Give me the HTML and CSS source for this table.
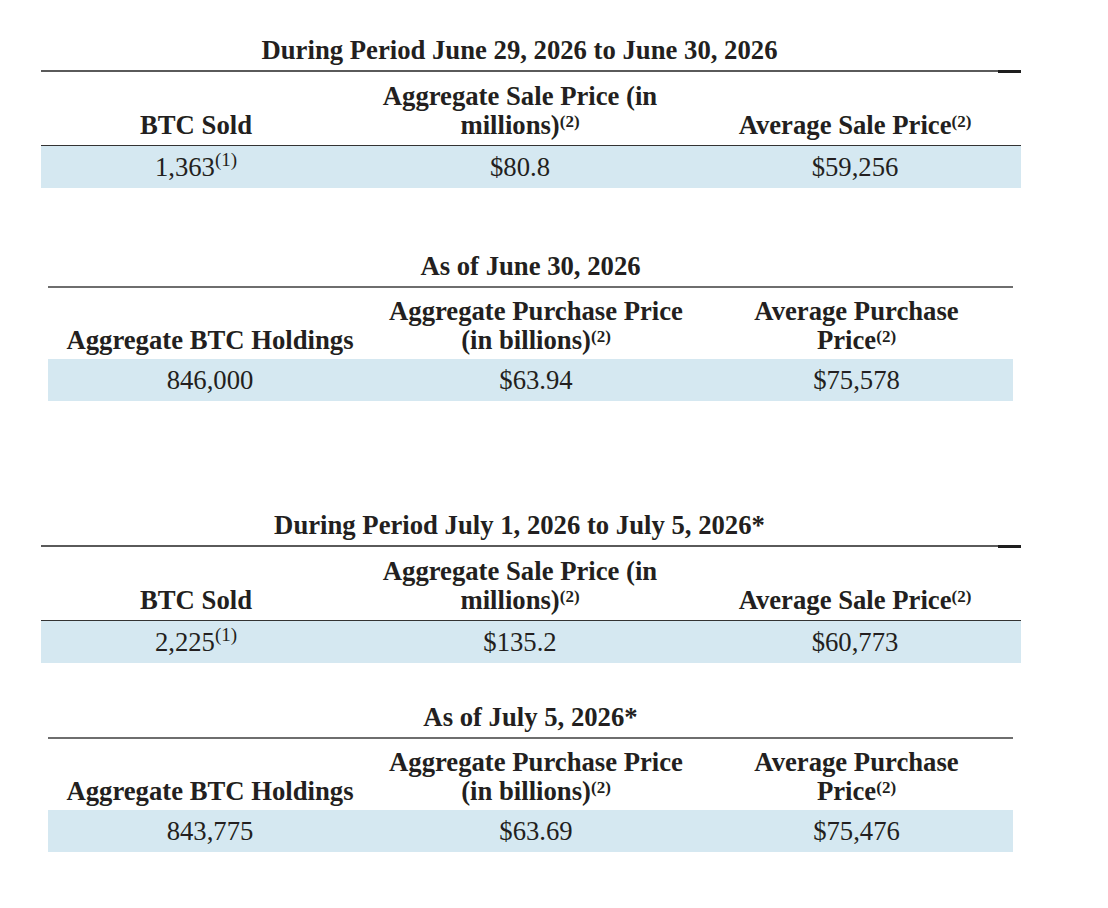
FILE: index.html
```html
<!DOCTYPE html>
<html lang="en">
<head>
<meta charset="utf-8">
<title>BTC Sales and Holdings</title>
<link rel="stylesheet" href="styles.css">
</head>
<body>
<main class="page">

  <section class="tbl tbl-sale gap-1">
    <div class="title-row">
      <div class="title">During Period June 29, 2026 to June 30, 2026</div>
      <div class="title-spacer"></div>
    </div>
    <div class="rule"><div class="rule-thin"></div><div class="rule-thick"></div></div>
    <div class="grid head">
      <div class="cell">BTC Sold</div>
      <div class="cell">Aggregate Sale Price (in<br>millions)<sup>(2)</sup></div>
      <div class="cell">Average Sale Price<sup>(2)</sup></div>
    </div>
    <div class="grid row">
      <div class="cell">1,363<sup>(1)</sup></div>
      <div class="cell">$80.8</div>
      <div class="cell">$59,256</div>
    </div>
  </section>

  <section class="tbl tbl-hold gap-2">
    <div class="title-row">
      <div class="title">As of June 30, 2026</div>
    </div>
    <div class="rule"><div class="rule-thin"></div></div>
    <div class="grid head">
      <div class="cell">Aggregate BTC Holdings</div>
      <div class="cell">Aggregate Purchase Price<br>(in billions)<sup>(2)</sup></div>
      <div class="cell">Average Purchase<br>Price<sup>(2)</sup></div>
    </div>
    <div class="grid row">
      <div class="cell">846,000</div>
      <div class="cell">$63.94</div>
      <div class="cell">$75,578</div>
    </div>
  </section>

  <section class="tbl tbl-sale gap-3">
    <div class="title-row">
      <div class="title">During Period July 1, 2026 to July 5, 2026*</div>
      <div class="title-spacer"></div>
    </div>
    <div class="rule"><div class="rule-thin"></div><div class="rule-thick"></div></div>
    <div class="grid head">
      <div class="cell">BTC Sold</div>
      <div class="cell">Aggregate Sale Price (in<br>millions)<sup>(2)</sup></div>
      <div class="cell">Average Sale Price<sup>(2)</sup></div>
    </div>
    <div class="grid row">
      <div class="cell">2,225<sup>(1)</sup></div>
      <div class="cell">$135.2</div>
      <div class="cell">$60,773</div>
    </div>
  </section>

  <section class="tbl tbl-hold gap-4">
    <div class="title-row">
      <div class="title">As of July 5, 2026*</div>
    </div>
    <div class="rule"><div class="rule-thin"></div></div>
    <div class="grid head">
      <div class="cell">Aggregate BTC Holdings</div>
      <div class="cell">Aggregate Purchase Price<br>(in billions)<sup>(2)</sup></div>
      <div class="cell">Average Purchase<br>Price<sup>(2)</sup></div>
    </div>
    <div class="grid row">
      <div class="cell">843,775</div>
      <div class="cell">$63.69</div>
      <div class="cell">$75,476</div>
    </div>
  </section>

</main>
</body>
</html>
```

FILE: styles.css
```css
* {
  box-sizing: border-box;
}

html, body {
  margin: 0;
  padding: 0;
  background: #ffffff;
}

body {
  font-family: "Liberation Serif", "Times New Roman", serif;
  font-size: 26.7px;
  color: #231f20;
}

.page {
  display: flex;
  flex-direction: column;
  padding-top: 39px;
}

.tbl {
  display: flex;
  flex-direction: column;
}

.tbl-sale {
  margin-left: 41px;
  width: 980px;
}

.tbl-hold {
  margin-left: 48px;
  width: 965px;
}

.gap-2 { margin-top: 67px; }
.gap-3 { margin-top: 113px; }
.gap-4 { margin-top: 43px; }

.title-row {
  display: flex;
  margin-bottom: 9px;
}

.title {
  flex: 1;
  text-align: center;
  font-weight: bold;
  line-height: 22px;
  height: 22px;
}

.title-spacer {
  width: 23px;
}

.rule {
  display: flex;
  align-items: flex-start;
  height: 2px;
}

.rule-thin {
  flex: 1;
  height: 2px;
  background: #5a5a5a;
}

.tbl-hold .rule-thin {
  background: #6e6e6e;
}

.rule-thick {
  width: 23px;
  height: 3px;
  background: #1e1e1e;
}

.grid {
  display: grid;
}

.tbl-sale .grid {
  grid-template-columns: 310px 338px 332px;
}

.tbl-hold .grid {
  grid-template-columns: 324px 328px 313px;
}

.head {
  align-items: end;
  font-weight: bold;
  line-height: 28.5px;
}

.tbl-sale .head {
  padding: 10px 0 6px;
  border-bottom: 1px solid #333333;
}

.tbl-hold .head {
  padding: 9px 0 5px;
}

.cell {
  text-align: center;
  white-space: nowrap;
}

.row {
  background: #d5e8f1;
  height: 42px;
  line-height: 42px;
}

sup {
  line-height: 0;
}

.head sup {
  font-size: 17px;
  vertical-align: 7px;
}

.row sup {
  font-size: 19px;
  vertical-align: 10px;
}
```
